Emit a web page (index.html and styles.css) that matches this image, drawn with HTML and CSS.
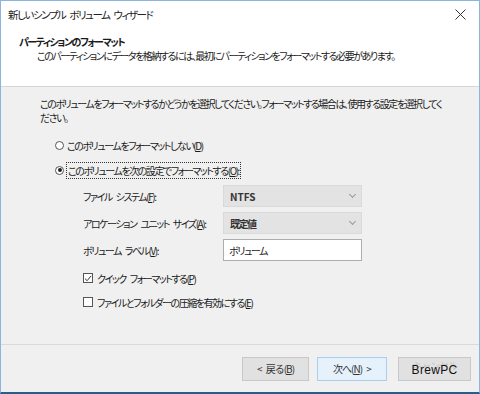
FILE: index.html
```html
<!DOCTYPE html>
<html lang="ja">
<head>
  <meta charset="UTF-8" />
  <title>新しいシンプル ボリューム ウィザード</title>
  <link rel="stylesheet" href="styles.css">
</head>
<body>

  <div class="window">

    <div class="titlebar">
      <span class="title">新しいシンプル ボリューム ウィザード</span>
      <span class="close">
        <svg width="11" height="11" viewBox="0 0 11 11"><path d="M0.5 0.5 L10.5 10.5 M10.5 0.5 L0.5 10.5" stroke="#333" stroke-width="1" fill="none"/></svg>
      </span>
    </div>

    <div class="header">
      <h1>パーティションのフォーマット</h1>
      <p>このパーティションにデータを格納するには、最初にパーティションをフォーマットする必要があります。</p>
    </div>

    <div class="content">
      <p class="intro">このボリュームをフォーマットするかどうかを選択してください。フォーマットする場合は、使用する設定を選択してください。</p>

      <div class="radio-row first">
        <span class="radio"></span>
        <span>このボリュームをフォーマットしない(<u>D</u>)</span>
      </div>
      <div class="radio-row">
        <span class="radio checked"></span>
        <span class="focus">このボリュームを次の設定でフォーマットする(<u>O</u>):</span>
      </div>

      <div class="settings">
        <div class="field">
          <label>ファイル システム(<u>F</u>):</label>
          <div class="select latin">NTFS<span class="arrow"></span></div>
        </div>
        <div class="field">
          <label>アロケーション ユニット サイズ(<u>A</u>):</label>
          <div class="select">既定値<span class="arrow"></span></div>
        </div>
        <div class="field">
          <label>ボリューム ラベル(<u>V</u>):</label>
          <div class="textbox">ボリューム</div>
        </div>

        <div class="checks">
          <div class="check-row">
            <span class="check">
              <svg width="9" height="9" viewBox="0 0 9 9"><path d="M1 4.5 L3.5 7 L8 1.5" stroke="#333" stroke-width="1.1" fill="none"/></svg>
            </span>
            <span>クイック フォーマットする(<u>P</u>)</span>
          </div>
          <div class="check-row">
            <span class="check"></span>
            <span>ファイルとフォルダーの圧縮を有効にする(<u>E</u>)</span>
          </div>
        </div>
      </div>
    </div>

    <div class="footer">
      <button class="btn back">&lt; 戻る(<u>B</u>)</button>
      <button class="btn default">次へ(<u>N</u>) &gt;</button>
      <button class="btn cancel">キャンセル<span class="mark">BrewPC</span></button>
    </div>

  </div>

</body>
</html>
```
FILE: styles.css
```css
* {
  margin: 0;
  padding: 0;
  box-sizing: border-box;
}

body {
  width: 480px;
  height: 394px;
  overflow: hidden;
  background: #f0f0f0;
  font-family: "Noto Sans CJK JP", "Noto Sans", sans-serif;
  font-size: 10px;
  font-feature-settings: "palt";
  letter-spacing: -1.45px;
  word-spacing: 3px;
  color: #1a1a1a;
}

u {
  text-decoration: underline;
  text-underline-offset: 1px;
}

.window {
  width: 480px;
  height: 394px;
  display: flex;
  flex-direction: column;
  border-left: 1px solid #8bb4df;
  border-right: 1px solid #8bb4df;
  border-top: 1px solid #8bb4df;
  border-bottom: 2px solid #2b5c8f;
}

.titlebar {
  height: 27px;
  background: #fff;
  display: flex;
  align-items: center;
  justify-content: space-between;
  padding: 0 13px 0 7px;
}

.title {
  font-size: 10.5px;
  color: #222;
}

.close {
  display: flex;
}

.header {
  height: 59px;
  background: #fff;
  border-bottom: 1px solid #d5d5d5;
  padding: 6px 0 0 18px;
}

.header h1 {
  font-size: 10px;
  font-weight: 700;
  line-height: 15px;
}

.header p {
  padding-left: 18px;
  line-height: 13px;
}

.content {
  flex: 1;
  padding: 10px 20px 0 39px;
}

.intro {
  line-height: 14px;
  width: 404px;
}

.radio-row {
  display: flex;
  align-items: center;
  gap: 3px;
  margin-left: 15px;
  height: 16px;
  margin-top: 9px;
}

.radio-row.first {
  margin-top: 12px;
}

.radio {
  width: 9px;
  height: 9px;
  border: 1px solid #555;
  border-radius: 50%;
  background: #fff;
  position: relative;
}

.radio.checked::after {
  content: "";
  position: absolute;
  left: 1.5px;
  top: 1.5px;
  width: 4px;
  height: 4px;
  border-radius: 50%;
  background: #222;
}

.focus {
  outline: 1px dotted #333;
  padding: 0 1px;
}

.settings {
  margin-left: 43px;
  margin-top: 7px;
}

.field {
  display: flex;
  align-items: center;
  height: 22px;
  margin-bottom: 5px;
}

.field label {
  width: 140px;
}

.select {
  width: 139px;
  height: 22px;
  background: #e3e3e3;
  border: 1px solid #d9d9d9;
  padding: 0 6px;
  display: flex;
  align-items: center;
  justify-content: space-between;
  font-weight: 700;
  color: #333;
}

.select.latin {
  letter-spacing: 0;
}

.arrow {
  width: 5px;
  height: 5px;
  border-right: 1px solid #999;
  border-bottom: 1px solid #999;
  transform: rotate(45deg);
  margin-top: -3px;
}

.textbox {
  width: 139px;
  height: 22px;
  background: #fff;
  border: 1px solid #adadad;
  padding: 0 5px;
  display: flex;
  align-items: center;
}

.checks {
  margin-top: 9px;
}

.check-row {
  display: flex;
  align-items: center;
  gap: 4px;
  height: 16px;
  margin-bottom: 8px;
}

.check {
  width: 10px;
  height: 10px;
  border: 1px solid #555;
  background: #fff;
  display: flex;
  align-items: center;
  justify-content: center;
}

.footer {
  height: 48px;
  border-top: 1px solid #dadada;
  display: flex;
  justify-content: flex-end;
  align-items: center;
  padding: 0 8px 0 0;
}

.btn {
  width: 67px;
  height: 24px;
  background: #e1e1e1;
  border: 1px solid #c8c8c8;
  font-family: inherit;
  font-size: 10px;
  letter-spacing: -1px;
  word-spacing: 3px;
  color: #333;
  position: relative;
}

.btn.default {
  width: 70px;
  margin-left: 8px;
  background: #e5f1fb;
  border-color: #a9cdee;
}

.btn.cancel {
  width: 73px;
  margin-left: 11px;
  color: #c4c4c4;
  padding-bottom: 6px;
}

.mark {
  position: absolute;
  left: 0;
  right: 0;
  top: 5px;
  font-family: "Liberation Sans", sans-serif;
  font-size: 12px;
  color: #111;
  letter-spacing: 0.3px;
  word-spacing: 0;
}
```
